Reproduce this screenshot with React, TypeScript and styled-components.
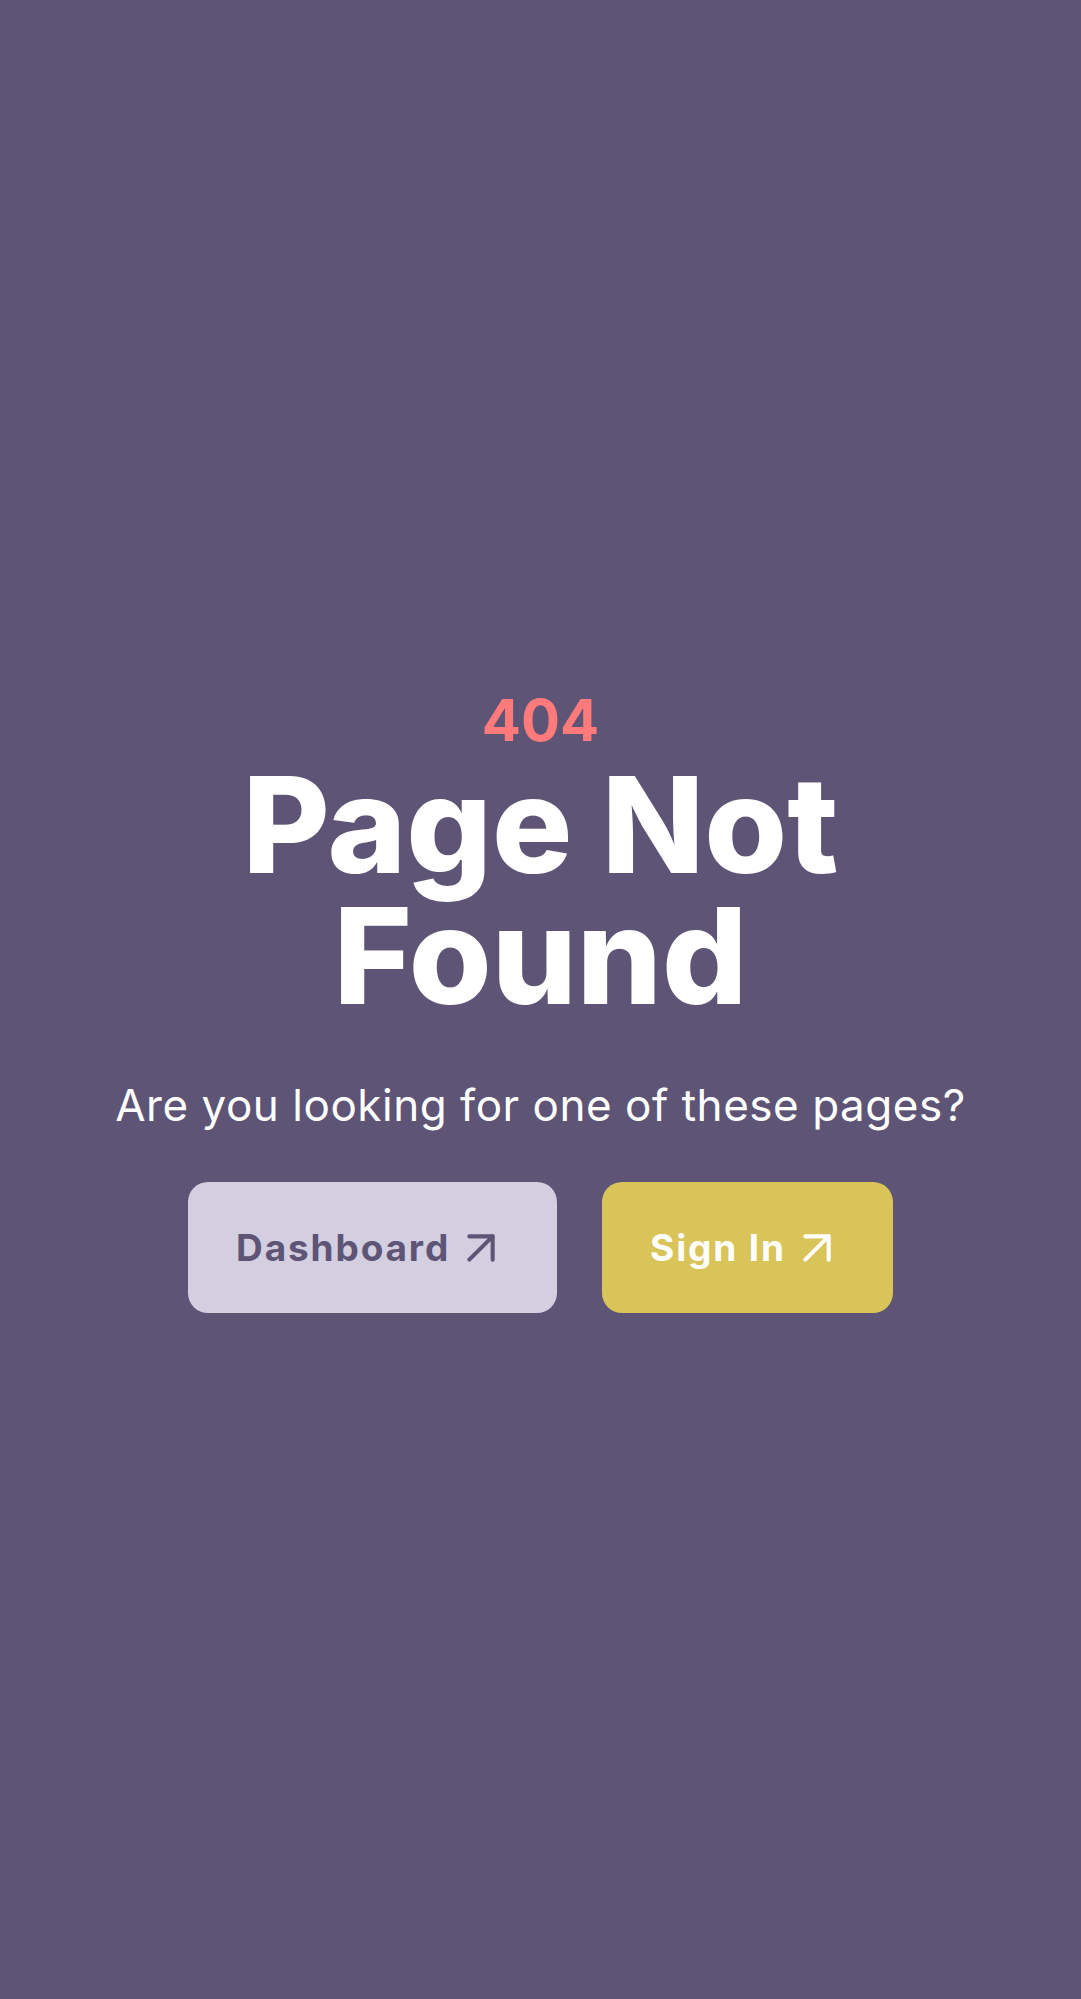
import React from "react";
import styled, { createGlobalStyle } from "styled-components";

const GlobalStyle = createGlobalStyle`
  html, body {
    margin: 0;
    padding: 0;
    background: #5d5476;
  }
  body {
    font-family: Inter, "Noto Sans", sans-serif;
  }
  * { box-sizing: border-box; }
`;

const Page = styled.main`
  min-height: 100vh;
  display: flex;
  flex-direction: column;
  align-items: center;
  justify-content: center;
  background: #5d5476;
  text-align: center;
  padding: 0 24px;
`;

const Code = styled.p`
  margin: 0;
  font-size: 58px;
  line-height: 1.2;
  font-weight: 700;
  color: #ff7a7a;
`;

const Title = styled.h1`
  margin: 4px 0 0;
  font-size: 134px;
  line-height: 131px;
  font-weight: 800;
  letter-spacing: 0;
  color: #ffffff;
`;

const Subtitle = styled.p`
  margin: 56px 0 0;
  font-size: 44px;
  line-height: 1.3;
  font-weight: 400;
  letter-spacing: 0.012em;
  color: #ffffff;
`;

const Actions = styled.div`
  display: flex;
  gap: 45px;
  margin-top: 48px;
`;

const Button = styled.a<{ $variant: "light" | "accent" }>`
  display: inline-flex;
  align-items: center;
  gap: 3px;
  height: 131px;
  padding: 0 48px;
  border-radius: 20px;
  font-size: 37px;
  font-weight: 700;
  letter-spacing: 0.05em;
  text-decoration: none;
  background: ${(p) => (p.$variant === "light" ? "#d3cfe0" : "#d9c459")};
  color: ${(p) => (p.$variant === "light" ? "#5d5476" : "#ffffff")};
`;

const Arrow = () => (
  <svg width="56" height="56" viewBox="0 0 24 24" fill="none" stroke="currentColor" strokeWidth="1.75" strokeLinecap="round" strokeLinejoin="round">
    <path d="M7 17 17 7" />
    <path d="M7 7h10v10" />
  </svg>
);

export default function App() {
  return (
    <>
      <GlobalStyle />
      <Page>
        <Code>404</Code>
        <Title>
          Page Not
          <br />
          Found
        </Title>
        <Subtitle>Are you looking for one of these pages?</Subtitle>
        <Actions>
          <Button href="#" $variant="light">
            Dashboard <Arrow />
          </Button>
          <Button href="#" $variant="accent">
            Sign In <Arrow />
          </Button>
        </Actions>
      </Page>
    </>
  );
}
